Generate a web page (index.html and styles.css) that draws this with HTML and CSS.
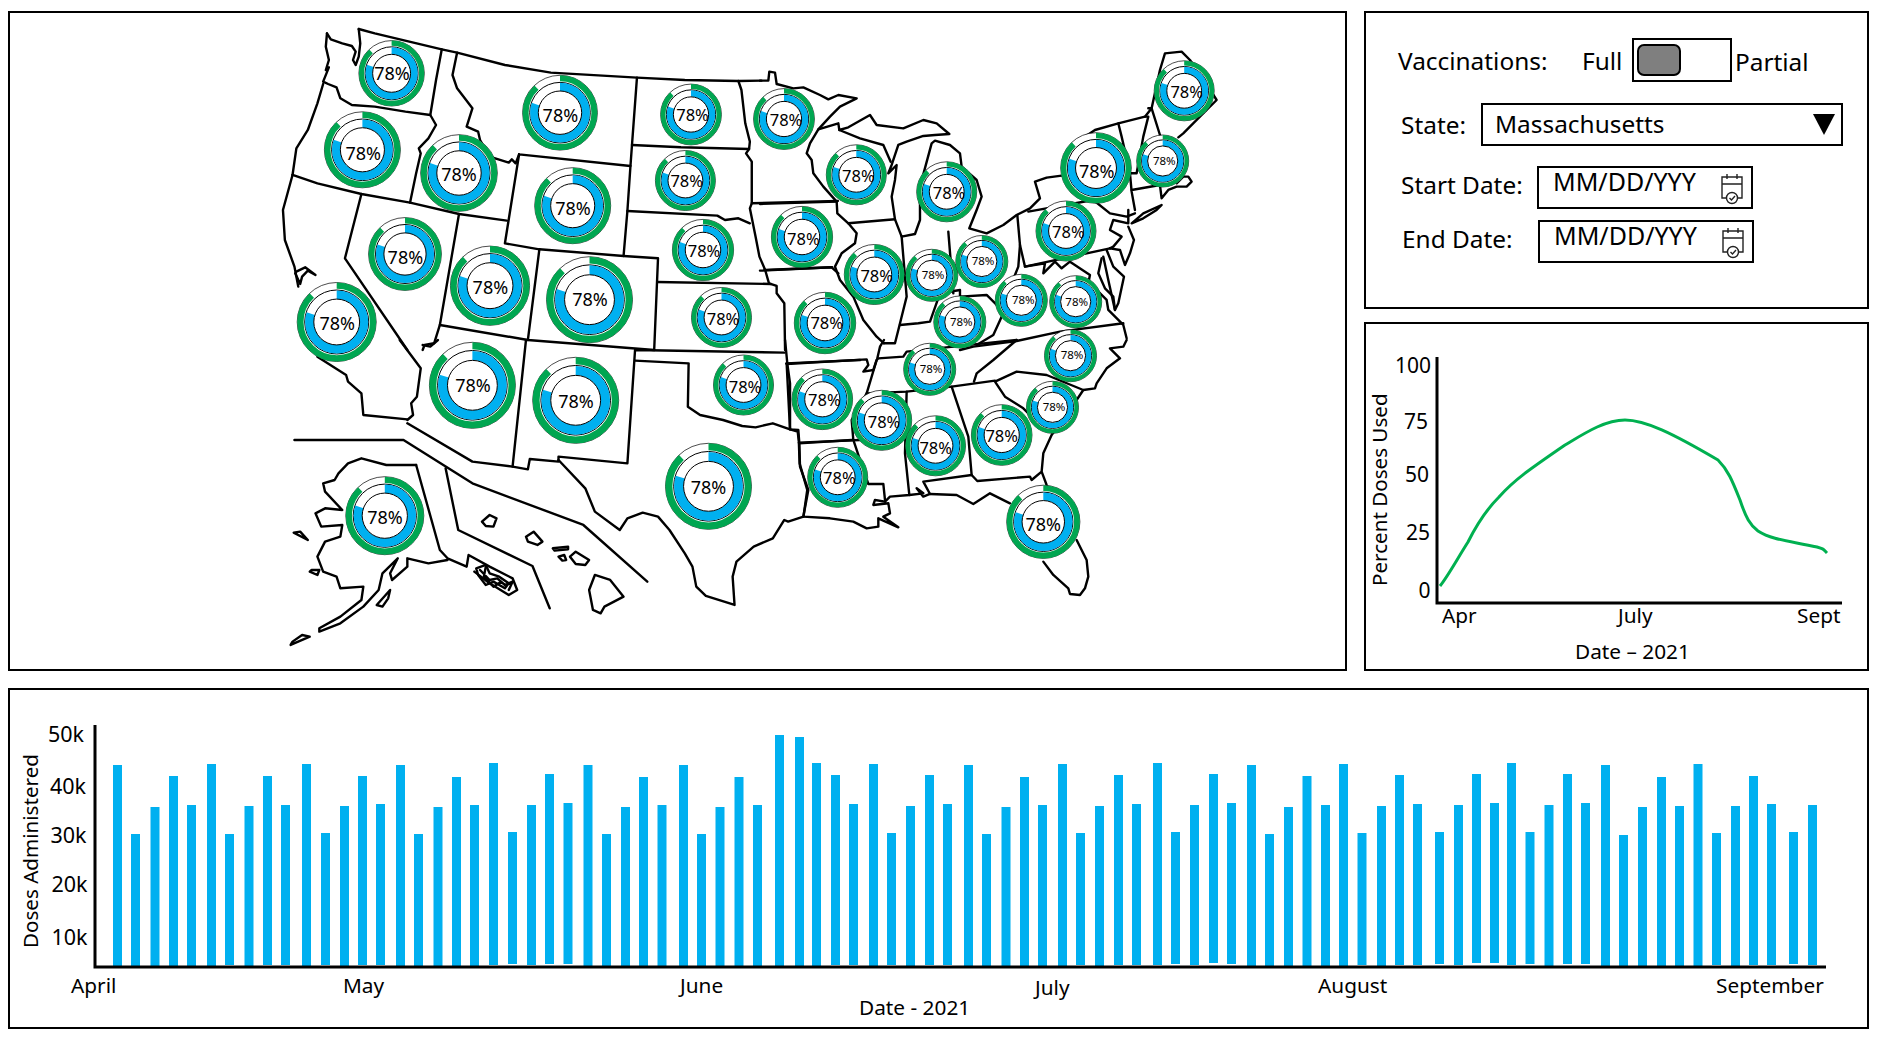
FILE: index.html
```html
<!DOCTYPE html>
<html lang="en">
<head>
    <meta charset="UTF-8">
    <meta name="viewport" content="width=device-width, initial-scale=1.0">
    <title>Vaccination Dashboard</title>
    <link rel="stylesheet" href="styles.css">
</head>
<body>
    <div class="dashboard">
        <div class="top-row">
            <div class="panel map-panel">
                <svg class="chart" viewBox="10 13 1335 656">
                    <defs>
                        <g id="ring">
                            <circle class="ring-edge" r="50"/>
                            <circle class="ring-green" r="46" pathLength="100" stroke-dasharray="88 100" transform="rotate(-90)"/>
                            <circle class="ring-line" r="40.5"/>
                            <circle class="ring-blue" r="34.5" pathLength="100" stroke-dasharray="80 100" transform="rotate(-90)"/>
                            <circle class="ring-hole" r="29"/>
                        </g>
                    </defs>

                    <!-- west -->
                    <g class="states" transform="translate(260 10) scale(.3827 .3333)">
                        <path d="M258 57L300 70 475 118 515 128 640 165 760 188 985 203 1110 210 1250 213 1310 212"/>
                        <path d="M175 70L185 88 215 100 240 108 250 125 243 150 250 165 258 140 262 100 258 57"/>
                        <path d="M175 70L172 110 180 150 172 180 180 172 165 215 178 222 200 232 210 265 240 285 300 290 380 305 445 315"/>
                        <path d="M165 222L150 280 125 360 95 415 85 495"/>
                        <path d="M85 495L150 520 265 552 392 578 520 612 645 632"/>
                        <path d="M475 118L460 210 445 315 460 345 440 385 415 415 420 430 408 490 392 578"/>
                        <path d="M515 128L503 195 515 235 555 295 540 350 570 365 575 390 600 440 650 458 658 448 668 460 677 433"/>
                        <path d="M677 433L968 468M677 433L640 700 730 718 950 738 1040 745 1030 1020"/>
                        <path d="M985 203L972 405 968 468 960 603 950 738"/>
                        <path d="M972 405L1100 412 1278 417"/>
                        <path d="M1250 213L1258 240 1268 340 1280 395 1278 417 1270 430 1285 455 1285 580 1280 595 1295 680 1305 740 1320 780 1330 820 1350 828 1350 850 1370 880 1372 1020"/>
                        <path d="M1285 580L1510 573M1320 780L1495 772"/>
                        <path d="M960 603L1195 617 1215 630 1250 625 1280 640"/>
                        <path d="M1038 816L1335 822"/>
                        <path d="M265 552L222 745 385 1020"/>
                        <path d="M520 612L470 945 700 990 1030 1020"/>
                        <path d="M730 718L700 990"/>
                        <path d="M85 495L60 600 65 690 90 770 100 830"/>
                        <path d="M92 790L105 822 110 800 125 782 145 795 118 772 95 785z"/>
                        <path d="M470 945L455 1000 430 1005 425 1020"/>
                    </g>

                    <!-- midwest and northeast -->
                    <g class="states" transform="translate(760 10) scale(.3333)">
                        <path d="M0 212L25 212 28 185 45 188 50 222 100 235 130 232 180 255 205 268 235 255 290 265 240 290 210 320 175 358 150 400 140 430 155 450 160 490 190 530 230 575 232 610 265 640 290 670 285 700 245 730 225 770 240 810 280 860 310 930 350 980 372 1000"/>
                        <path d="M175 358L235 340 238 360 265 352 330 315 350 345 430 355 490 330 530 340 568 372 525 375 490 378 440 395 415 405 395 465 385 490 410 465 405 510 395 560 405 628 425 680 465 672 480 630 480 530 515 400 525 392 570 405 600 430 605 470 650 510 665 560 650 600 628 655 680 670 730 645 770 615 810 595 840 565 825 515 860 503 905 497"/>
                        <path d="M238 360L300 385 370 405 392 455"/>
                        <path d="M0 582L230 575M0 782L215 772 235 790"/>
                        <path d="M265 640L405 628"/>
                        <path d="M425 680L440 860 430 900 415 960 405 1000 372 1000"/>
                        <path d="M420 945L475 940 510 935 540 850 600 840 600 860 680 855 710 885 715 855 755 820 775 770 780 705 772 615"/>
                        <path d="M565 665L580 850"/>
                        <path d="M795 770L1050 715M780 705L795 770"/>
                        <path d="M805 605L1000 570 1050 610 1100 620 1125 610"/>
                        <path d="M795 770L855 760 850 790 885 755 905 775 930 755 990 795 985 820 1000 830 1040 870 1045 900 1090 945 1100 985"/>
                        <path d="M1090 940L900 965 770 993 640 1010 600 1020"/>
                        <path d="M725 920L700 975 650 1005"/>
                        <path d="M975 380L1005 360 1075 340 1155 320 1175 295"/>
                        <path d="M1075 340L1085 380 1110 490 1115 545 1125 600"/>
                        <path d="M1155 320L1165 320 1150 380 1130 490 1110 490"/>
                        <path d="M1175 295L1200 375 1210 395"/>
                        <path d="M1115 540L1200 525 1205 565 1225 540 1250 530 1280 530 1295 515 1285 500 1270 500 1250 520"/>
                        <path d="M1165 295L1175 295 1200 180 1215 130 1265 125 1290 150 1345 230 1370 270 1340 300 1290 350 1270 370 1255 382"/>
                        <path d="M1115 640L1150 610 1205 585 1190 600 1150 625z"/>
                        <path d="M1105 600L1105 640 1060 630 1050 660 1085 680 1060 710 1050 715"/>
                        <path d="M1105 650L1122 690 1110 730 1095 765 1080 720 1050 715"/>
                        <path d="M1040 720L1060 770 1092 800 1075 880 1065 900 1045 810 1030 740"/>
                        <path d="M1025 745L1015 790 1035 835 1060 860 1065 900"/>
                    </g>

                    <!-- southwest and insets -->
                    <g class="states" transform="translate(260 340) scale(.3827 .3333)">
                        <path d="M150 50L225 105 230 125 265 160 270 225 385 238"/>
                        <path d="M365 0L420 85 410 170 395 190 400 225 385 240"/>
                        <path d="M425 15L445 20 465 0"/>
                        <path d="M385 250L555 365 660 380 700 388 705 357 780 365 780 350 960 370 980 30 1370 38"/>
                        <path d="M695 0L660 380"/>
                        <path d="M980 62L1120 70 1118 200 1150 225 1210 240 1260 258 1295 262 1340 250 1385 268 1405 275 1408 305 1410 370 1430 450 1420 530"/>
                        <path d="M1372 0L1378 72 1385 130 1385 268"/>
                        <path d="M1375 70L1568 60M1408 308L1568 300"/>
                        <path d="M780 360L850 445 875 515 940 570 960 535 1000 518 1040 530 1070 570 1110 640 1130 680 1140 740 1165 768 1240 795 1235 710 1245 665 1290 620 1340 595 1370 540 1380 545 1420 530"/>
                        <path d="M90 300L375 300 555 430 845 555 1012 725"/>
                        <path d="M485 385L518 570 712 678 757 805"/>
                        <path d="M408 375L470 630 490 655 540 680 545 645 600 680 660 715 672 750 650 765 600 730 560 695"/>
                        <path d="M565 685L590 675 600 700 625 710 650 730 640 745 610 725 590 735 570 705z"/>
                        <path d="M575 690L600 720 620 715 640 735 660 725 650 750M590 680L585 710 610 740 630 725"/>
                        <path d="M408 375L330 375 265 355 230 370 205 400 195 420 165 430 170 455 215 510 170 505 145 520 160 560 215 555 210 590 170 605 150 650 165 695 200 710 210 745 270 740 265 780 210 830 155 865 155 875 210 850 270 800 310 750 320 700 360 655 340 700 345 720 385 680 385 655 440 670 490 660"/>
                        <path d="M80 915L130 890 110 885 85 905z"/>
                        <path d="M305 795L340 750 335 775 320 800z"/>
                        <path d="M88 578L125 600 105 575z"/>
                        <path d="M130 695L150 705 155 690 135 690z"/>
                        <path d="M580 545L600 525 618 535 610 560 590 558z"/>
                        <path d="M695 590L715 575 738 605 725 615 700 605z"/>
                        <path d="M765 625L805 620 805 628 770 632z"/>
                        <path d="M780 650L795 645 800 660 790 662z"/>
                        <path d="M810 650L825 635 860 660 850 675 825 672z"/>
                        <path d="M875 705L915 720 950 770 900 800 890 820 870 810 860 750z"/>
                    </g>

                    <!-- southeast -->
                    <g class="states" transform="translate(760 340) scale(.3333)">
                        <path d="M372 0L360 20 352 55"/>
                        <path d="M80 72L320 58 325 75 310 95 340 90 350 60 355 55 430 50 440 35 720 5 770 0"/>
                        <path d="M80 72L90 268 115 270 118 310 275 300"/>
                        <path d="M350 60L320 160 275 240 280 300 300 360 325 432 370 432 375 480"/>
                        <path d="M118 310L120 380 145 450 130 530 210 535 280 545 320 565 355 560 355 535 415 562 370 530 390 520 385 490 340 495 345 480 375 485 390 470 448 465 490 460 470 445 490 470 510 462 590 465 640 492 690 460 750 490"/>
                        <path d="M850 665L880 705 925 745 930 762 960 765 975 745 985 710 980 660 950 600"/>
                        <path d="M440 155L435 340 448 465"/>
                        <path d="M320 160L440 155 575 140 705 122"/>
                        <path d="M575 140L625 290 635 405 652 423 810 410 815 420 845 395 860 435 880 470M845 395L850 340 875 285 950 180 970 150 1005 145 1010 130 1040 85 1080 55 1050 25 1090 20 1100 0"/>
                        <path d="M490 425L635 405M490 425L510 462"/>
                        <path d="M705 125L735 170 790 205 810 225M705 125L770 95 860 105 970 150"/>
                        <path d="M770 0L700 60 650 100 642 125"/>
                    </g>

                    <g class="rings">
                        <use href="#ring" transform="translate(391.6 73.3) scale(.654)"/>
                        <use href="#ring" transform="translate(362.4 149.8) scale(.76)"/>
                        <use href="#ring" transform="translate(459 173) scale(.766)"/>
                        <use href="#ring" transform="translate(560 112.7) scale(.748)"/>
                        <use href="#ring" transform="translate(691 114.5) scale(.608)"/>
                        <use href="#ring" transform="translate(784 119) scale(.608)"/>
                        <use href="#ring" transform="translate(685.4 180.5) scale(.6)"/>
                        <use href="#ring" transform="translate(572.7 205.7) scale(.76)"/>
                        <use href="#ring" transform="translate(405 254) scale(.728)"/>
                        <use href="#ring" transform="translate(703 250) scale(.612)"/>
                        <use href="#ring" transform="translate(802 237) scale(.612)"/>
                        <use href="#ring" transform="translate(490 285.7) scale(.792)"/>
                        <use href="#ring" transform="translate(589.5 299.7) scale(.86)"/>
                        <use href="#ring" transform="translate(336.7 322) scale(.79)"/>
                        <use href="#ring" transform="translate(472.4 385.3) scale(.86)"/>
                        <use href="#ring" transform="translate(575.7 400.3) scale(.86)"/>
                        <use href="#ring" transform="translate(384.8 515.7) scale(.78)"/>
                        <use href="#ring" transform="translate(708.5 486.3) scale(.86)"/>
                        <use href="#ring" transform="translate(721.5 317.5) scale(.6)"/>
                        <use href="#ring" transform="translate(825 323) scale(.614)"/>
                        <use href="#ring" transform="translate(743.5 385) scale(.6)"/>
                        <use href="#ring" transform="translate(822.3 399.3) scale(.606)"/>
                        <use href="#ring" transform="translate(837.7 477.3) scale(.6)"/>
                        <use href="#ring" transform="translate(881.7 420.3) scale(.6)"/>
                        <use href="#ring" transform="translate(935.5 445.8) scale(.6)"/>
                        <use href="#ring" transform="translate(1001.7 435) scale(.606)"/>
                        <use href="#ring" transform="translate(1052.5 407.3) scale(.52)"/>
                        <use href="#ring" transform="translate(1043.3 521.8) scale(.732)"/>
                        <use href="#ring" transform="translate(929.7 369.3) scale(.52)"/>
                        <use href="#ring" transform="translate(1070.5 355.7) scale(.52)"/>
                        <use href="#ring" transform="translate(1075.7 301.7) scale(.52)"/>
                        <use href="#ring" transform="translate(959.8 322) scale(.52)"/>
                        <use href="#ring" transform="translate(1021.3 300.3) scale(.52)"/>
                        <use href="#ring" transform="translate(931.8 275.3) scale(.52)"/>
                        <use href="#ring" transform="translate(981.8 261.5) scale(.52)"/>
                        <use href="#ring" transform="translate(874.3 274.5) scale(.6)"/>
                        <use href="#ring" transform="translate(856.3 174.8) scale(.6)"/>
                        <use href="#ring" transform="translate(946.7 191.8) scale(.6)"/>
                        <use href="#ring" transform="translate(1066 231) scale(.6)"/>
                        <use href="#ring" transform="translate(1096 168) scale(.706)"/>
                        <use href="#ring" transform="translate(1162.7 161) scale(.52)"/>
                        <use href="#ring" transform="translate(1184.2 90.8) scale(.6)"/>
                    </g>

                    <g class="pct pct-lg">
                        <text x="392" y="73">78%</text>
                        <text x="363.3" y="152.7">78%</text>
                        <text x="459" y="174">78%</text>
                        <text x="560.4" y="115">78%</text>
                        <text x="573" y="208">78%</text>
                        <text x="405.4" y="256.7">78%</text>
                        <text x="490.4" y="287">78%</text>
                        <text x="590" y="299">78%</text>
                        <text x="337.3" y="323">78%</text>
                        <text x="473" y="385">78%</text>
                        <text x="576" y="400.7">78%</text>
                        <text x="385" y="517">78%</text>
                        <text x="708.5" y="486.7">78%</text>
                        <text x="1043.3" y="524">78%</text>
                        <text x="1096.7" y="171">78%</text>
                    </g>
                    <g class="pct pct-md">
                        <text x="692.5" y="114.7">78%</text>
                        <text x="786" y="119">78%</text>
                        <text x="686.7" y="180">78%</text>
                        <text x="704" y="250.7">78%</text>
                        <text x="803.4" y="238">78%</text>
                        <text x="723" y="318">78%</text>
                        <text x="826.7" y="322">78%</text>
                        <text x="745" y="386">78%</text>
                        <text x="824.3" y="399.3">78%</text>
                        <text x="839.3" y="477.7">78%</text>
                        <text x="884" y="421">78%</text>
                        <text x="935.7" y="447.7">78%</text>
                        <text x="1001.7" y="435.7">78%</text>
                        <text x="876.7" y="275.3">78%</text>
                        <text x="858.3" y="175">78%</text>
                        <text x="949" y="192">78%</text>
                        <text x="1068.3" y="231.7">78%</text>
                        <text x="1186.7" y="91">78%</text>
                    </g>
                    <g class="pct pct-sm">
                        <text x="1054" y="406">78%</text>
                        <text x="931" y="368.3">78%</text>
                        <text x="1072" y="354">78%</text>
                        <text x="1076.7" y="301">78%</text>
                        <text x="961.3" y="321">78%</text>
                        <text x="1023.3" y="299">78%</text>
                        <text x="933" y="274">78%</text>
                        <text x="983" y="260">78%</text>
                        <text x="1164.3" y="160">78%</text>
                    </g>
                </svg>
            </div>

            <div class="side">
                <div class="panel controls">
                    <div class="row row-vacc">
                        <span class="label label-vacc">Vaccinations:</span>
                        <span class="label label-full">Full</span>
                        <div class="toggle"><div class="knob"></div></div>
                        <span class="label label-partial">Partial</span>
                    </div>
                    <div class="row row-state">
                        <span class="label label-state">State:</span>
                        <div class="select">
                            <span class="select-text">Massachusetts</span>
                            <div class="arrow"></div>
                        </div>
                    </div>
                    <div class="row row-start">
                        <span class="label label-date">Start Date:</span>
                        <div class="date-box">
                            <span>MM/DD/YYY</span>
                            <svg class="cal" viewBox="0 0 24 32"><use href="#cal-icon"/></svg>
                        </div>
                    </div>
                    <div class="row row-end">
                        <span class="label label-date">End Date:</span>
                        <div class="date-box">
                            <span>MM/DD/YYY</span>
                            <svg class="cal" viewBox="0 0 24 32">
                                <g id="cal-icon">
                                    <path d="M7 25H2V4H22V25H17M2 11H22M7 1V6M17 1V6"/>
                                    <circle cx="12" cy="25" r="5.5"/>
                                    <path d="M9.5 25l2 2 3.5-4"/>
                                </g>
                            </svg>
                        </div>
                    </div>
                </div>

                <div class="panel trend">
                    <svg class="chart" viewBox="1366 324 501 345">
                        <path class="axis" d="M1437 357V603H1842"/>
                        <path class="trend-line" d="M1440 586C1448 576 1456 561 1468 542C1476 526 1486 510 1499 497C1514 480 1530 469 1565 445C1585 433 1605 420 1625 420C1645 420 1672 433 1718 460C1728 470 1732 480 1740 500C1746 518 1750 525 1758 531C1772 540 1790 541 1817 547C1824 549 1823 549 1827 553"/>
                        <g class="tick-y tick-trend">
                            <text x="1431" y="373">100</text>
                            <text x="1428" y="429">75</text>
                            <text x="1429" y="482">50</text>
                            <text x="1430" y="540">25</text>
                            <text x="1430.5" y="598">0</text>
                        </g>
                        <g class="tick-x">
                            <text x="1442" y="623">Apr</text>
                            <text x="1618" y="623">July</text>
                            <text x="1797" y="623">Sept</text>
                            <text x="1575" y="659">Date – 2021</text>
                        </g>
                        <text class="axis-title" transform="translate(1386.5 586) rotate(-90)">Percent Doses Used</text>
                    </svg>
                </div>
            </div>
        </div>

        <div class="panel doses">
            <svg class="chart" viewBox="10 690 1857 337">
                <g class="bars">
                    <rect x="113" y="765" width="9" height="202"/>
                    <rect x="131" y="834" width="9" height="133"/>
                    <rect x="150.5" y="807" width="9" height="160"/>
                    <rect x="169" y="776" width="9" height="191"/>
                    <rect x="187" y="805" width="9" height="162"/>
                    <rect x="207" y="764" width="9" height="203"/>
                    <rect x="225" y="834" width="9" height="131"/>
                    <rect x="244.5" y="806" width="9" height="161"/>
                    <rect x="263" y="776" width="9" height="189"/>
                    <rect x="281" y="805" width="9" height="160"/>
                    <rect x="302" y="764" width="9" height="203"/>
                    <rect x="321" y="833" width="9" height="132"/>
                    <rect x="340" y="806" width="9" height="161"/>
                    <rect x="358" y="776" width="9" height="189"/>
                    <rect x="376" y="804" width="9" height="161"/>
                    <rect x="396" y="765" width="9" height="202"/>
                    <rect x="414" y="834" width="9" height="133"/>
                    <rect x="433.5" y="807" width="9" height="160"/>
                    <rect x="452" y="777" width="9" height="190"/>
                    <rect x="470" y="805" width="9" height="162"/>
                    <rect x="489" y="763" width="9" height="202"/>
                    <rect x="508" y="832" width="9" height="132"/>
                    <rect x="527" y="805" width="9" height="160"/>
                    <rect x="545" y="774" width="9" height="190"/>
                    <rect x="563.5" y="803" width="9" height="161"/>
                    <rect x="583.5" y="765" width="9" height="202"/>
                    <rect x="602" y="834" width="9" height="133"/>
                    <rect x="621" y="807" width="9" height="160"/>
                    <rect x="639" y="777" width="9" height="190"/>
                    <rect x="657.5" y="805" width="9" height="162"/>
                    <rect x="679" y="765" width="9" height="202"/>
                    <rect x="697" y="834" width="9" height="133"/>
                    <rect x="715.5" y="807" width="9" height="160"/>
                    <rect x="734.5" y="777" width="9" height="190"/>
                    <rect x="753" y="805" width="9" height="162"/>
                    <rect x="775" y="735" width="9" height="232"/>
                    <rect x="795" y="737" width="9" height="230"/>
                    <rect x="812" y="763" width="9" height="204"/>
                    <rect x="831" y="775" width="9" height="190"/>
                    <rect x="849" y="804" width="9" height="161"/>
                    <rect x="869" y="764" width="9" height="203"/>
                    <rect x="887" y="833" width="9" height="132"/>
                    <rect x="906" y="806" width="9" height="161"/>
                    <rect x="925" y="775" width="9" height="190"/>
                    <rect x="943" y="804" width="9" height="161"/>
                    <rect x="964" y="765" width="9" height="202"/>
                    <rect x="982" y="834" width="9" height="133"/>
                    <rect x="1001.5" y="807" width="9" height="160"/>
                    <rect x="1020" y="777" width="9" height="190"/>
                    <rect x="1038" y="805" width="9" height="162"/>
                    <rect x="1058" y="764" width="9" height="203"/>
                    <rect x="1076" y="833" width="9" height="132"/>
                    <rect x="1095" y="806" width="9" height="161"/>
                    <rect x="1114" y="775" width="9" height="190"/>
                    <rect x="1132" y="804" width="9" height="161"/>
                    <rect x="1153" y="763" width="9" height="202"/>
                    <rect x="1171" y="832" width="9" height="132"/>
                    <rect x="1190" y="805" width="9" height="160"/>
                    <rect x="1209" y="774" width="9" height="189"/>
                    <rect x="1227" y="803" width="9" height="161"/>
                    <rect x="1247" y="765" width="9" height="202"/>
                    <rect x="1265" y="834" width="9" height="133"/>
                    <rect x="1284" y="807" width="9" height="160"/>
                    <rect x="1302.5" y="776" width="9" height="191"/>
                    <rect x="1321" y="805" width="9" height="162"/>
                    <rect x="1339" y="764" width="9" height="203"/>
                    <rect x="1357.5" y="833" width="9" height="132"/>
                    <rect x="1377" y="806" width="9" height="161"/>
                    <rect x="1395" y="775" width="9" height="190"/>
                    <rect x="1413" y="804" width="9" height="161"/>
                    <rect x="1435" y="832" width="9" height="132"/>
                    <rect x="1454" y="805" width="9" height="160"/>
                    <rect x="1472" y="774" width="9" height="189"/>
                    <rect x="1490" y="803" width="9" height="160"/>
                    <rect x="1507" y="763" width="9" height="202"/>
                    <rect x="1525.5" y="832" width="9" height="132"/>
                    <rect x="1544.5" y="805" width="9" height="162"/>
                    <rect x="1563" y="774" width="9" height="190"/>
                    <rect x="1581" y="803" width="9" height="161"/>
                    <rect x="1601" y="765" width="9" height="202"/>
                    <rect x="1619" y="835" width="9" height="132"/>
                    <rect x="1638" y="807" width="9" height="160"/>
                    <rect x="1657" y="777" width="9" height="190"/>
                    <rect x="1675" y="806" width="9" height="161"/>
                    <rect x="1693.5" y="764" width="9" height="203"/>
                    <rect x="1712" y="833" width="9" height="132"/>
                    <rect x="1731" y="806" width="9" height="161"/>
                    <rect x="1749" y="776" width="9" height="189"/>
                    <rect x="1767" y="804" width="9" height="161"/>
                    <rect x="1789" y="832" width="9" height="132"/>
                    <rect x="1808" y="805" width="9" height="160"/>
                </g>
                <path class="axis" d="M95 725V967H1826"/>
                <g class="tick-y">
                    <text x="84" y="742">50k</text>
                    <text x="86" y="794">40k</text>
                    <text x="86.5" y="843">30k</text>
                    <text x="87.5" y="892">20k</text>
                    <text x="87.5" y="945">10k</text>
                </g>
                <g class="tick-x">
                    <text x="71" y="993">April</text>
                    <text x="343" y="993">May</text>
                    <text x="680" y="993">June</text>
                    <text x="1035" y="995">July</text>
                    <text x="1318" y="993">August</text>
                    <text x="1716" y="993">September</text>
                    <text x="859" y="1015">Date - 2021</text>
                </g>
                <text class="axis-title" transform="translate(38 948) rotate(-90)">Doses Administered</text>
            </svg>
        </div>
    </div>
</body>
</html>
```

FILE: styles.css
```css
body {
    margin: 0;
    background-color: #fff;
    color: #000;
    font-family: "Noto Sans", "Open Sans", sans-serif;
}

.dashboard {
    display: flex;
    flex-direction: column;
    gap: 17px;
    width: 1861px;
    padding: 11px 0 0 8px;
}

.top-row {
    display: flex;
    gap: 17px;
    height: 660px;
}

.side {
    display: flex;
    flex-direction: column;
    gap: 13px;
    width: 505px;
}

.panel {
    box-sizing: border-box;
    border: 2px solid #000;
    background-color: #fff;
}

.map-panel {
    width: 1339px;
}

.controls {
    height: 298px;
    padding-top: 25px;
}

.trend {
    flex: 1;
}

.doses {
    height: 341px;
}

.chart {
    display: block;
    width: 100%;
    height: 100%;
}

/* map */
.states path {
    fill: none;
    stroke: #000;
    stroke-width: 2.4px;
    stroke-linejoin: round;
    stroke-linecap: round;
    vector-effect: non-scaling-stroke;
}

.ring-edge {
    fill: #fff;
    stroke: #000;
    stroke-width: .7px;
    vector-effect: non-scaling-stroke;
}

.ring-green {
    fill: none;
    stroke: #00a651;
    stroke-width: 8;
}

.ring-line {
    fill: #fff;
    stroke: #000;
    stroke-width: 1px;
    vector-effect: non-scaling-stroke;
}

.ring-blue {
    fill: none;
    stroke: #00b0f0;
    stroke-width: 11;
}

.ring-hole {
    fill: #fff;
    stroke: #000;
    stroke-width: 1px;
    vector-effect: non-scaling-stroke;
}

.pct text {
    text-anchor: middle;
    dominant-baseline: central;
}

.pct-lg {
    font-size: 18px;
}

.pct-md {
    font-size: 16.5px;
}

.pct-sm {
    font-size: 11.5px;
}

/* controls */
.row {
    display: flex;
    align-items: center;
    font-size: 24.4px;
}

.row-vacc {
    height: 44px;
    padding-left: 32px;
}

.row-state {
    height: 43px;
    margin-top: 21px;
    padding-left: 35px;
}

.row-start {
    height: 43px;
    margin-top: 20px;
    padding-left: 35px;
}

.row-end {
    height: 43px;
    margin-top: 11px;
    padding-left: 36px;
}

.label-vacc {
    width: 184px;
}

.label-full {
    width: 50px;
}

.toggle {
    box-sizing: border-box;
    width: 100px;
    height: 44px;
    padding: 4px 3px;
    border: 2px solid #000;
}

.knob {
    box-sizing: border-box;
    width: 44px;
    height: 32px;
    border: 2px solid #000;
    border-radius: 7px;
    background-color: #7f7f7f;
}

.label-partial {
    margin-left: 3px;
    padding-top: 3px;
}

.label-state {
    width: 80px;
}

.select {
    box-sizing: border-box;
    display: flex;
    align-items: center;
    justify-content: space-between;
    width: 362px;
    height: 43px;
    padding: 0 6px 0 12px;
    border: 2px solid #000;
}

.select-text {
    padding-bottom: 3px;
}

.arrow {
    width: 0;
    height: 0;
    border-left: 11px solid transparent;
    border-right: 11px solid transparent;
    border-top: 21px solid #000;
}

.label-date {
    width: 136px;
    padding-bottom: 6px;
}

.date-box {
    box-sizing: border-box;
    display: flex;
    justify-content: space-between;
    width: 216px;
    height: 43px;
    padding: 0 7px 0 14px;
    border: 2px solid #000;
    font-size: 25px;
    line-height: 26px;
}

.cal {
    width: 24px;
    height: 32px;
    margin-top: 5px;
    fill: none;
    stroke: #222;
    stroke-width: 1.4;
}

/* charts */
.axis {
    fill: none;
    stroke: #000;
    stroke-width: 3px;
}

.trend-line {
    fill: none;
    stroke: #00b050;
    stroke-width: 3px;
}

.bars rect {
    fill: #00b0f0;
}

.tick-y text {
    text-anchor: end;
    font-size: 21.5px;
}

.tick-trend text {
    font-size: 21px;
}

.tick-x text {
    font-size: 20.8px;
}

.axis-title {
    font-size: 20.6px;
}
```
